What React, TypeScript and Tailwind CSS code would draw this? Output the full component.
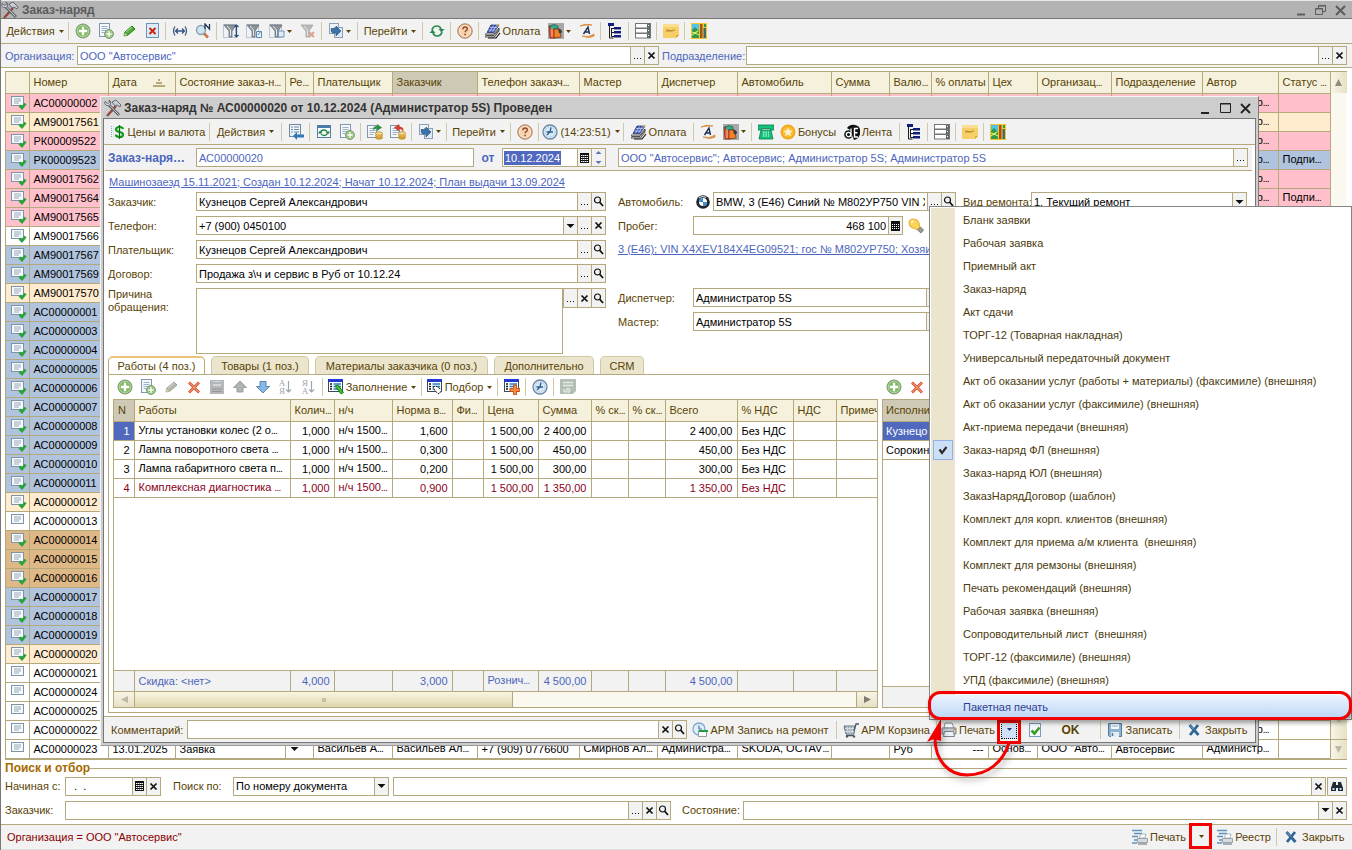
import type { ReactNode } from 'react'
import clsx from 'clsx'

const LINE = 'border-[#b3a97c]'

/* ---------- icons ---------- */

function Svg({ children, w = 16, h = 16 }: { children: ReactNode; w?: number; h?: number }) {
  return (
    <svg width={w} height={h} viewBox={`0 0 ${w} ${h}`} fill="none" className="shrink-0" aria-hidden>
      {children}
    </svg>
  )
}

const Doc = ({ x = 2, y = 1, w = 10, h = 13 }) => (
  <>
    <rect x={x + 0.5} y={y + 0.5} width={w} height={h} fill="#f4f8fc" stroke="#8297ad" />
    <path d={`M${x + 2.5} ${y + 3.5}h6M${x + 2.5} ${y + 5.5}h6M${x + 2.5} ${y + 7.5}h6M${x + 2.5} ${y + 9.5}h4`} stroke="#9bb2c9" />
  </>
)

const Plus = ({ cx, cy, r }: { cx: number; cy: number; r: number }) => (
  <>
    <circle cx={cx} cy={cy} r={r} fill="#7fbb62" stroke="#7f9277" />
    <circle cx={cx} cy={cy} r={r - 1.2} stroke="#c4e2b4" strokeWidth=".7" />
    <path d={`M${cx - r * 0.6} ${cy}h${r * 1.2}M${cx} ${cy - r * 0.6}v${r * 1.2}`} stroke="#fff" strokeWidth={r / 3} />
  </>
)

const Tools = () => (
  <Svg w={18} h={18}>
    <path d="M3 17L12 7" stroke="#8f4a35" strokeWidth="2.4" />
    <path d="M8 3l4-2 5 5-1 2-3-2-2 1z" fill="#c9ced6" stroke="#4c5058" strokeWidth=".8" />
    <path d="M4 5l11 11" stroke="#565b64" strokeWidth="2.6" />
    <path d="M4.500 5l10 10.500" stroke="#d5dae2" strokeWidth="1" />
    <path d="M1 2.500a3 3 0 1 0 4-1.500l.5 2.500-2 1z" fill="#d5dae2" stroke="#4c5058" strokeWidth=".8" />
  </Svg>
)
const Add = () => <Svg><Plus cx={8} cy={8} r={7} /></Svg>
const AddDoc = () => <Svg><Doc x={1} y={0} /><Plus cx={11} cy={11} r={4.4} /></Svg>
const Pencil = ({ off = false }) => (
  <Svg>
    <path d="M3 13l1-4 7-6 3 3-7 6z" fill={off ? '#b5b9b0' : '#4fae35'} stroke={off ? '#9ba098' : '#2f7a22'} />
    <path d="M5 9l6-5" stroke={off ? '#d4d7d0' : '#a9e08f'} />
    <path d="M3 13l1-3 2 2z" fill="#e9d3a2" />
  </Svg>
)
const DelDoc = () => (
  <Svg>
    <rect x="2.500" y=".5" width="12" height="14" fill="#dcebf8" stroke="#6d93b8" />
    <path d="M5.500 5l6 6M11.500 5l-6 6" stroke="#c8240f" strokeWidth="2" />
  </Svg>
)
const Fit = () => (
  <Svg>
    <path d="M3 3.500q-3 4.500 0 9M13 3.500q3 4.500 0 9" stroke="#34557d" strokeWidth="1.200" />
    <path d="M4 8h8M6 5.500L3.500 8 6 10.500M10 5.500L12.500 8 10 10.500" stroke="#34557d" strokeWidth="1.300" />
  </Svg>
)
const Find = () => (
  <Svg>
    <circle cx="6" cy="7" r="4.500" fill="#cfe3f3" stroke="#8a9fb3" strokeWidth="1.400" />
    <path d="M9 10.500l4 4" stroke="#c97a4a" strokeWidth="2.600" />
    <path d="M10 6V1l4.500 5V1" stroke="#1d3453" strokeWidth="1.300" />
  </Svg>
)
const Funnel = ({ kind = 0 }) => (
  <Svg>
    {kind < 3 && <rect x=".5" y="1.500" width="12" height="13" fill="#eef3f8" stroke="#b9c6d4" />}
    {kind === 2 && <path d="M9 8h6v6H9z" fill="#dcebf8" stroke="#6d93b8" />}
    <path d="M1 2h12L9 8v6H6V8z" fill={kind === 3 ? '#b9b9b9' : '#8d9298'} stroke={kind === 3 ? '#a5a5a5' : '#6b7178'} strokeWidth=".8" />
    <path d="M4 3l3.500 4v6" stroke="#e6e9ec" strokeWidth="1" />
    {kind === 0 && <path d="M13.500 2v12M11.500 4l2-2 2 2M11.500 12l2 2 2-2" stroke="#24507f" strokeWidth="1.200" />}
    {kind === 1 && <path d="M10.500 8.500h5v6h-5zM12 12l3-4" stroke="#5d87b4" fill="#e4f0fa" />}
    {kind === 3 && <path d="M9 9l5 5M14 9l-5 5" stroke="#d9a08a" strokeWidth="1.800" />}
  </Svg>
)
const CopyArrow = () => (
  <Svg>
    <rect x="1.500" y=".5" width="9" height="10" fill="#eef3f8" stroke="#8ba0b6" />
    <rect x="6.500" y="4.500" width="8" height="10" fill="#dfeaf5" stroke="#8ba0b6" />
    <path d="M3 5.500h5V3l5 5-5 5v-3H5q-2 0-2-4z" fill="#3d72a8" stroke="#234f7c" strokeWidth=".6" />
  </Svg>
)
const Refresh = () => (
  <Svg>
    <path d="M3 7q1-4 5-4 3 0 4 3M13 9q-1 4-5 4-3 0-4-3" stroke="#2b8a4d" strokeWidth="1.700" />
    <path d="M9.500 6h6L12.500 9.500zM.5 10h6L3.500 6.500z" fill="#2b8a4d" />
  </Svg>
)
const Help = () => (
  <Svg>
    <circle cx="8" cy="8" r="7.200" fill="#f0b98c" stroke="#a97b5e" />
    <circle cx="8" cy="8" r="5.600" fill="#f7d2b0" stroke="#fdeede" strokeWidth=".8" />
    <path d="M5.800 6.300q.2-2.300 2.300-2.300 2.200 0 2.200 1.900 0 1-1.200 1.700-1 .6-1 1.700" stroke="#8b4a22" strokeWidth="1.400" />
    <path d="M7.300 10.800h1.600v1.500H7.300z" fill="#8b4a22" />
  </Svg>
)
const Pay = () => (
  <Svg>
    <path d="M2 9.500L6 2h8L9 9.500z" fill="#3d55b5" stroke="#1c2a6e" strokeWidth=".7" />
    <path d="M5 4.500h7M3.500 7h7M8.500 2.500l-4 6.500M11.500 2.500l-4 6.500" stroke="#c3cef8" strokeWidth=".8" />
    <path d="M0 11h9l5-6v3l-4.500 6H0z" fill="#dfe2d8" stroke="#2a2a2a" strokeWidth=".8" />
    <path d="M1 12.500h8l5-6" stroke="#2a2a2a" strokeWidth=".8" />
    <path d="M3 15h8l4-5" stroke="#111" strokeWidth="1.200" />
    <path d="M12 3l2-2" stroke="#d8b84f" strokeWidth="1.500" />
  </Svg>
)
const Books = () => (
  <Svg>
    <path d="M0 0h16v16H0z" fill="#a8a8a8" />
    <path d="M1 3h5l1 12H2z" fill="#e8542b" stroke="#7d2410" strokeWidth=".7" />
    <path d="M2 3q4-3 8 0v3H3z" fill="#3aa68c" stroke="#155c4c" strokeWidth=".7" />
    <path d="M6 6h6l1 8-7 1z" fill="#f08228" stroke="#6d2d0b" strokeWidth=".7" />
    <path d="M10 6q4 0 4 3-1 2-3 1z" fill="#3c3c3c" />
    <path d="M4 5v9" stroke="#f9c0a0" />
  </Svg>
)
const ASwoosh = () => (
  <Svg>
    <path d="M1 3q5-3 12-1-6-.5-12 1zM3 13q7 2 12-2v2q-5 3-12 0z" fill="#d98b3a" stroke="#d98b3a" strokeWidth=".8" />
    <path d="M4.500 11L9 4l1.500 7M6 9h4.500" stroke="#1d2f57" strokeWidth="1.400" />
  </Svg>
)
const Tree = () => (
  <Svg>
    <path d="M1 0h6v3H1zM7 4h7v2.500H7zM7 8h7v2.500H7zM7 12h7v2.500H7z" fill="#101f7a" />
    <path d="M2.500 3v12h4M4.500 5v8.500M4.500 5.500H7M4.500 9.500H7M4.500 13.500H7" stroke="#1a1a1a" />
  </Svg>
)
const Drawers = () => (
  <Svg>
    {[0, 5, 10].map((y) => (
      <g key={y}>
        <rect x=".5" y={y + 0.5} width="15" height="4.500" fill="#fff" stroke="#747474" />
        <path d={`M12 ${y + 1}h3v4h-3z`} fill="#5b6a68" />
        <path d={`M13 ${y + 2}h1v1h-1z`} fill="#fff" />
      </g>
    ))}
  </Svg>
)
const Note = () => (
  <Svg>
    <path d="M0 1h16v11l-3 3H0z" fill="#f6cf66" />
    <path d="M0 1h16v3H0z" fill="#fadf92" />
    <path d="M13 15v-3h3z" fill="#d9a53a" />
    <path d="M3.500 8.500q1-4 1.500 0 1-3 2 0 1-3 2 0 1-3 3-1" stroke="#b07a28" strokeWidth=".9" />
  </Svg>
)
const MapIcon = () => (
  <Svg>
    <path d="M0 0h16v16H0z" fill="#f7c62f" />
    <path d="M1 1h7v6H1z" fill="#4fc3e8" />
    <path d="M1 7l3-3 4 4v7H1z" fill="#2e9b4a" />
    <path d="M1 12q3-3 7 0M1 9l3 1 3-2" stroke="#eaf36b" strokeWidth="1.200" />
    <path d="M9 1h2.500v14H9z" fill="#a6521c" />
    <path d="M12.500 5h2.500v10h-2.500z" fill="#3f6d74" />
    <path d="M13 1h2v3h-2z" fill="#2e9b4a" />
  </Svg>
)
const Dollar = () => (
  <Svg>
    <path d="M1.500 2v12" stroke="#8fa2b6" strokeDasharray="1 1" />
    <path d="M3.500 2v12" stroke="#c9d3de" strokeDasharray="1 1" />
    <path d="M13 5Q12.500 3 9.500 3 6 3 6 5.500 6 7.500 9.500 8t3.500 2.700Q13 13 9.500 13t-3.700-2.300" stroke="#149a1d" strokeWidth="2.200" />
    <path d="M9.500 1v14" stroke="#0c6e14" strokeWidth="1.300" />
  </Svg>
)
const ListBack = () => (
  <Svg>
    <rect x="1.500" y=".5" width="11" height="12" fill="#eef4fa" stroke="#7189a1" />
    <path d="M3 3h2M3 5.500h2M3 8h2M6 3h5M6 5.500h5M6 8h5" stroke="#7189a1" />
    <path d="M5 12l4-4v2.500h7v3H9V16z" fill="#2f78b7" />
  </Svg>
)
const WinRefresh = () => (
  <Svg>
    <rect x="1.500" y="1.500" width="13" height="12" fill="#f5f9fd" stroke="#587a9b" />
    <path d="M1 1h14v3H1z" fill="#4c7ba8" />
    <path d="M4.500 8q1-2 3.500-2 2 0 3 1.500M11.500 9.500q-1 2-3.500 2-2 0-3-1.500" stroke="#1f7f3f" strokeWidth="1.300" />
    <path d="M9.500 7.500h4.500l-2 3zM2 9.500h4.500l-2.500-3z" fill="#1f7f3f" />
  </Svg>
)
const Coins = ({ red = false }) => (
  <Svg>
    <Doc x={0} y={1} w={9} h={12} />
    {red ? <path d="M13 9q0-4-4-4v2.500L4 3.500 9 0v2.500q6 0 4 6.500z" fill="#d8402a" /> : <path d="M6 6q0-4 4-4V0l5 3.500L10 7V4.500Q8 4.500 6 6z" fill="#2f8f3d" />}
    <ellipse cx="12" cy="13.500" rx="3.500" ry="1.700" fill="#e9b13a" stroke="#a97413" strokeWidth=".7" />
    <ellipse cx="12" cy="11.500" rx="3.500" ry="1.700" fill="#f5cb5c" stroke="#a97413" strokeWidth=".7" />
    <ellipse cx="12" cy="9.500" rx="3.500" ry="1.700" fill="#fbe08c" stroke="#a97413" strokeWidth=".7" />
  </Svg>
)
const Clock = () => (
  <Svg>
    <circle cx="8" cy="8" r="7" fill="#dbeaf7" stroke="#6b87a3" strokeWidth="1.300" />
    <circle cx="8" cy="8" r="5" stroke="#8fb0cf" strokeWidth="1" strokeDasharray="1 1.600" />
    <path d="M9 3.500L8 8 5 11M4.500 8H11" stroke="#2a5f93" strokeWidth="1.300" />
  </Svg>
)
const Phone = () => (
  <Svg>
    <path d="M0 1h16v5h-3.500V4.500h-9V6H0z" fill="#12c27c" stroke="#077a4b" strokeWidth=".8" />
    <path d="M3 6h10l2 9H1z" fill="#12c27c" stroke="#077a4b" strokeWidth=".8" />
    <path d="M5 8h6M5 10h6M5 12h6" stroke="#e6fff3" strokeDasharray="1.500 1" />
  </Svg>
)
const Bonus = () => (
  <Svg>
    <circle cx="8" cy="8" r="7.500" fill="#f6a81c" />
    <circle cx="8" cy="8" r="5.500" fill="#f9bd3e" />
    <path d="M8 3.500l1.400 3 3.200.3-2.400 2.200.7 3.200L8 10.600l-2.900 1.600.7-3.200-2.400-2.200 3.200-.3z" fill="#fff3cf" />
  </Svg>
)
const Tape = () => (
  <Svg>
    <path d="M3 4q3-4 8-3 5 1 5 5v4q-1 5-6 6L6 6z" fill="#111" />
    <circle cx="4.500" cy="10.500" r="4.300" fill="#111" />
    <circle cx="4.500" cy="10.500" r="2.200" stroke="#fff" strokeWidth="1.300" />
    <path d="M7 4.500v8.500" stroke="#fff" strokeWidth="1.300" />
    <path d="M14 4.500h-3.500v8.500H14M10.500 8.700h3" stroke="#fff" strokeWidth="1.400" />
  </Svg>
)
const RedX = () => <Svg><path d="M3 3.500l10 10M13 3.500L3 13.500" stroke="#d9532c" strokeWidth="2.800" /><path d="M3.500 4l9 9M12.500 4l-9 9" stroke="#f9b59b" strokeWidth="1" /></Svg>
const BlueX = () => <Svg><path d="M3.500 3l9 10M12 3L4 13" stroke="#2f6596" strokeWidth="2.800" /><path d="M4 3.500l4 4" stroke="#86add0" /></Svg>
const SaveOff = () => (
  <Svg>
    <path d="M1 1h14v14H1z" fill="#b4b8bb" />
    <path d="M4 2h8v5H4z" fill="#d3d6d8" />
    <path d="M4 4h8M3 10h10M3 12.500h10" stroke="#92979b" />
  </Svg>
)
const Arrow = ({ down = false }) => (
  <Svg>
    {down ? (
      <path d="M5 2.500h6v5h3.500L8 14 1.500 7.500H5z" fill="#86b9e6" stroke="#5687b5" />
    ) : (
      <path d="M5 13h6V8.500h3.500L8 2 1.500 8.500H5z" fill="#b0b4b6" stroke="#9ba0a3" />
    )}
  </Svg>
)
const Sort = ({ top, bottom }: { top: string; bottom: string }) => (
  <span className="flex h-4 items-center text-[#a0a4a8]">
    <span className="flex flex-col font-serif text-[9px] leading-[8px]">
      <span>{top}</span>
      <span>{bottom}</span>
    </span>
    <svg width="7" height="16" viewBox="0 0 7 16" fill="none" aria-hidden>
      <path d="M3.500 2v11M1 10.500L3.500 13 6 10.500" stroke="#a0a4a8" strokeWidth="1.200" />
    </svg>
  </span>
)
const ListIcon = ({ mark }: { mark: 'wand' | 'hand' | 'plus' }) => (
  <Svg>
    <rect x=".5" y=".5" width="14" height="12" fill="#fff" stroke="#3a4a5a" />
    <path d="M0 0h15v3H0z" fill="#2238d0" />
    <path d="M2 5h2M2 7.500h2M2 10h2" stroke="#1a1a1a" strokeWidth="1.400" />
    <path d="M5.500 5H13M5.500 7.500H13M5.500 10H13" stroke="#2a7fc0" strokeWidth="1.300" />
    {mark === 'wand' && <path d="M7 7l3-1 5.500 7.500L13 15z" fill="#3fc22b" stroke="#0d6f12" strokeWidth=".8" />}
    {mark === 'hand' && <path d="M6 8l3-1 6 4-3 4-4-3z" fill="#fff" stroke="#111" strokeDasharray="2 1" />}
    {mark === 'plus' && <path d="M9.500 6h3v3.500H16v3h-3.500V16h-3v-3.500H6v-3h3.500z" fill="#f58a3c" stroke="#c44a12" strokeWidth=".8" />}
  </Svg>
)
const FormOff = () => (
  <Svg>
    <path d="M0 0h16v12l-3 3H0z" fill="#b3bfb5" />
    <path d="M3 3.500h10M3 6.500h10" stroke="#e3e9e4" strokeWidth="1.500" />
    <path d="M4 10v2q2 2 3 0v-2q2-1 3 1l-2 3" stroke="#e3e9e4" strokeWidth="1.400" />
  </Svg>
)
const Bmw = () => (
  <Svg w={14} h={14}>
    <circle cx="7" cy="7" r="6.800" fill="#22262c" />
    <circle cx="7" cy="7" r="4" fill="#fff" />
    <path d="M7 3a4 4 0 0 0-4 4h4zM7 11a4 4 0 0 0 4-4H7z" fill="#3f8fd0" />
    <path d="M3 3q3-2.500 7-.5" stroke="#c9d2dc" strokeWidth="1.200" />
  </Svg>
)
const Bulb = () => (
  <Svg>
    <path d="M1 5Q1 1 5.500 1T11 5q0 2 1 4l-3 3q-2-2-4.500-2Q1 9 1 5z" fill="#fbd55a" stroke="#e3ab32" />
    <path d="M3.500 5Q4 3 6 3" stroke="#fff4c4" strokeWidth="1.500" />
    <path d="M9.500 12l3-3 3 3-2.500 3z" fill="#9a9a94" stroke="#6f6f6a" strokeWidth=".8" />
  </Svg>
)
const ClockDoc = () => (
  <Svg>
    <circle cx="7" cy="7" r="6" fill="#dfeefa" stroke="#7fa9cd" strokeWidth="1.300" />
    <path d="M7 3.500V7h3" stroke="#4a7ba6" strokeWidth="1.200" />
    <path d="M6.500 8.500h8v6h-8z" fill="#fff" stroke="#8f9aa5" />
    <path d="M7 8h9v2H7z" fill="#1e9b3b" />
  </Svg>
)
const Cart = () => (
  <Svg>
    <path d="M1 4h11l-1 8H3z" fill="#9eabb6" stroke="#66727c" />
    <path d="M4 4l1 8M7 4v8M10 4l-1 8M2 6.500h9M2 9.500h9" stroke="#dde5ec" strokeWidth=".8" />
    <path d="M11 9l2-7h3M3 13.500h8" stroke="#4c5863" strokeWidth="1.300" />
    <circle cx="4" cy="14.500" r="1.200" fill="#4c5863" />
    <circle cx="11" cy="14.500" r="1.200" fill="#4c5863" />
  </Svg>
)
const Printer = () => (
  <Svg>
    <path d="M4 1h7l2 5H3z" fill="#fff" stroke="#8b97a3" />
    <path d="M1 6h14v6H1z" fill="#c3cad1" stroke="#77828c" />
    <path d="M3.500 9.500h9l1 5h-11z" fill="#eef2f6" stroke="#77828c" />
    <path d="M12 7.500h2" stroke="#e08a2c" strokeWidth="1.500" />
  </Svg>
)
const CheckDoc = () => (
  <Svg>
    <rect x="2.500" y="1.500" width="11" height="13" fill="#f3f9fe" stroke="#7b9cb9" />
    <path d="M4.500 8.500l3 3 5-6" stroke="#3c9b2b" strokeWidth="2.600" />
  </Svg>
)
const Floppy = () => (
  <Svg>
    <path d="M1.500 1.500h13v13h-12l-1-1z" fill="#8fb2d1" stroke="#54789a" />
    <path d="M4 2h8v5H4z" fill="#f4f9fd" />
    <path d="M4 10h8v5H4z" fill="#e4edf5" />
    <path d="M5 4h6" stroke="#9db6cc" />
    <path d="M5.500 11v3" stroke="#54789a" strokeWidth="1.500" />
  </Svg>
)
const PrintList = () => (
  <Svg>
    <path d="M0 1.500h10M2 4.500h8M0 7.500h6M2 11h3M0 14h5" stroke="#5f93bd" strokeWidth="1.400" />
    <path d="M7 9l2-4h5l-1 4z" fill="#fff" stroke="#9aa6b0" strokeWidth=".8" />
    <path d="M5.500 9.500h10v4h-10z" fill="#d5dbe1" stroke="#8a949d" strokeWidth=".8" />
    <path d="M6 15h9" stroke="#5e6972" />
  </Svg>
)
const RowIcon = ({ done }: { done: boolean }) => (
  <Svg>
    <rect x=".5" y="1.500" width="12" height="9" fill="#f7fafc" stroke="#7f93a8" />
    <path d="M3 4h7M3 6h7M3 8h5" stroke="#97a8b9" />
    {done && <path d="M8.500 10.500l2.500 2.500 3.500-4.500" stroke="#2aa33a" strokeWidth="2.800" />}
  </Svg>
)
const Glass = () => (
  <Svg w={11} h={11}>
    <circle cx="4.500" cy="4" r="3" stroke="#111" strokeWidth="1.200" />
    <path d="M6.500 6l3.500 4" stroke="#111" strokeWidth="1.800" />
  </Svg>
)
const Cross = () => <Svg w={9} h={9}><path d="M1.500 1.500l6 6M7.500 1.500l-6 6" stroke="#111" strokeWidth="1.700" /></Svg>
const Dots = () => <Svg w={9} h={9}><path d="M1 7h1v1H1zM4 7h1v1H4zM7 7h1v1H7z" fill="#111" /></Svg>
const Calc = () => (
  <Svg w={9} h={10}>
    <path d="M0 0h9v10H0z" fill="#111" />
    <path d="M1 3.500h7M1 5.500h7M1 7.500h7" stroke="#fff" strokeDasharray="1 1" />
  </Svg>
)
const Calendar = () => (
  <Svg w={9} h={10}>
    <path d="M0 0h9v10H0z" fill="#111" />
    <path d="M1 2.500h7M1 4.500h7M1 6.500h7M1 8.500h7" stroke="#fff" />
    <path d="M2.500 2v7M4.500 2v7M6.500 2v7" stroke="#111" strokeWidth=".5" />
  </Svg>
)
const Down = () => <Svg w={9} h={6}><path d="M.5 1h8l-4 4z" fill="#111" /></Svg>
const Caret = ({ color = '#594304' }) => <Svg w={5} h={3}><path d="M0 0h5L2.500 3z" fill={color} /></Svg>
const Spin = () => (
  <Svg w={7} h={13}>
    <path d="M3.500 0L6.500 3h-6zM3.500 13l3-3h-6z" fill="#6173b5" />
  </Svg>
)
const Binoculars = () => (
  <Svg w={12} h={12}>
    <path d="M2 2h3v3h2V2h3l2 6v3H7V8H5v3H0V8z" fill="#1f2b33" />
    <path d="M1.500 8h2v2h-2zM8.500 8h2v2h-2z" fill="#c6dbe6" />
  </Svg>
)

const GLYPHS = {
  dots: { icon: <Dots />, name: 'Выбрать' },
  clear: { icon: <Cross />, name: 'Очистить' },
  find: { icon: <Glass />, name: 'Открыть' },
  down: { icon: <Down />, name: 'Список' },
  calc: { icon: <Calc />, name: 'Калькулятор' },
  date: { icon: <Calendar />, name: 'Календарь' },
  spin: { icon: <Spin />, name: 'Изменить' },
}
type Glyph = keyof typeof GLYPHS

/* ---------- controls ---------- */

/* Roboto's ellipsis is narrow enough for the tight columns */
function Cut({ text }: { text: string }) {
  if (!text.endsWith('…')) return text
  return (
    <>
      {text.slice(0, -1)}
      <span className="font-['Roboto',sans-serif] text-[10px]">…</span>
    </>
  )
}

function Sep() {
  return (
    <span className="flex w-[5px] shrink-0 justify-center">
      <span className="h-[18px] w-px bg-[#cfc9a8]" />
    </span>
  )
}

function Tool({ icon, text, caret, name, width = 'w-[23px]' }: { icon?: ReactNode; text?: string; caret?: boolean; name?: string; width?: string }) {
  return (
    <button type="button" aria-label={text ? undefined : name} className={clsx('flex h-[22px] shrink-0 items-center justify-center gap-[2px] whitespace-nowrap', width)}>
      {icon}
      {text}
      {caret && <span className={clsx(text && 'pl-[2px]')}><Caret /></span>}
    </button>
  )
}

function Field({ id, value, name, actions = [], width, inputClass }: { id: string; value?: string; name?: string; actions?: Glyph[]; width: string; inputClass?: string }) {
  return (
    <div className={clsx('flex h-[19px] min-w-0 border bg-white', LINE, width)}>
      <input id={id} aria-label={name} defaultValue={value} className={clsx('min-w-0 flex-1 bg-transparent px-[2px] outline-none', inputClass ?? 'text-black')} />
      <Actions list={actions} />
    </div>
  )
}

function Actions({ list }: { list: Glyph[] }) {
  return (
    <>
      {list.map((a) => (
        <button key={a} type="button" aria-label={GLYPHS[a].name} className={clsx('flex w-[14px] shrink-0 items-center justify-center border-l bg-[#f2f2f2]', LINE)}>
          {GLYPHS[a].icon}
        </button>
      ))}
    </>
  )
}

function Choice({ id, value, width }: { id: string; value: string; width: string }) {
  return (
    <div className={clsx('relative flex h-[19px] min-w-0 border bg-white', LINE, width)}>
      <select id={id} className="min-w-0 flex-1 appearance-none bg-transparent px-[2px] text-black outline-none">
        <option>{value}</option>
      </select>
      <span className={clsx('pointer-events-none absolute inset-y-0 right-0 flex w-[14px] items-center justify-center border-l bg-[#f2f2f2]', LINE)}>
        <Down />
      </span>
    </div>
  )
}

/* ---------- order list ---------- */

const PINK = 'bg-[#ffc0cb]'
const BLUE = 'bg-[#b0c4de]'
const ALMOND = 'bg-[#ffebcd]'
const WOOD = 'bg-[#deb887]'
const WHITE = 'bg-white'

type Order = { no: string; tone: string; draft?: boolean; status?: string }

const ORDERS: Order[] = [
  { no: 'АС00000002', tone: PINK },
  { no: 'АМ90017561', tone: ALMOND },
  { no: 'РК00009522', tone: PINK },
  { no: 'РК00009523', tone: BLUE, status: 'Подпи…' },
  { no: 'АМ90017562', tone: PINK },
  { no: 'АМ90017564', tone: PINK, status: 'Подпи…' },
  { no: 'АМ90017565', tone: PINK },
  { no: 'АМ90017566', tone: WHITE },
  { no: 'АМ90017567', tone: BLUE },
  { no: 'АМ90017569', tone: BLUE },
  { no: 'АМ90017570', tone: ALMOND },
  ...['01', '03', '04', '05', '06', '07', '08', '09', '10', '11'].map((n) => ({ no: `АС000000${n}`, tone: BLUE })),
  { no: 'АС00000012', tone: ALMOND },
  { no: 'АС00000013', tone: WHITE, draft: true },
  ...['14', '15', '16'].map((n) => ({ no: `АС000000${n}`, tone: WOOD })),
  ...['17', '18', '19'].map((n) => ({ no: `АС000000${n}`, tone: BLUE })),
  { no: 'АС00000020', tone: ALMOND },
  ...['21', '24', '25', '22', '23'].map((n) => ({ no: `АС000000${n}`, tone: WHITE, draft: true })),
]

const ORDER_COLS: [string, string][] = [
  ['', 'w-[23px]'],
  ['Номер', 'w-[79px]'],
  ['Дата', 'w-[67px]'],
  ['Состояние заказ-н…', 'w-[110px]'],
  ['Ре…', 'w-[28px]'],
  ['Плательщик', 'w-[79px]'],
  ['Заказчик', 'w-[85px]'],
  ['Телефон заказч…', 'w-[102px]'],
  ['Мастер', 'w-[78px]'],
  ['Диспетчер', 'w-[80px]'],
  ['Автомобиль', 'w-[94px]'],
  ['Сумма', 'w-[58px]'],
  ['Валю…', 'w-[42px]'],
  ['% оплаты', 'w-[57px]'],
  ['Цех', 'w-[49px]'],
  ['Организац…', 'w-[74px]'],
  ['Подразделение', 'w-[91px]'],
  ['Автор', 'w-[76px]'],
  ['Статус …', 'w-[52px]'],
]

const LAST_ROW = ['13.01.2025', 'Заявка', '▾', 'Васильев А…', 'Васильев Ал…', '+7 (909) 0776600', 'Смирнов Ал…', 'Администра…', 'SKODA, OCTAV…', '', 'Руб', '---', 'Основ…', 'ООО "Авто…', 'Автосервис']

function OrderTable() {
  return (
    <div className={clsx('mr-[5px] ml-[4px] flex border', LINE)}>
      <table className="w-full flex-1 table-fixed border-collapse">
        <thead>
          <tr className="h-[21px] bg-[#f5f1dc] text-left">
            {ORDER_COLS.map(([title, w], i) => (
              <th key={title} className={clsx('overflow-hidden border-r border-b pl-[4px] font-normal whitespace-nowrap', LINE, w, title === 'Заказчик' && 'bg-[#cdc9b4]')}>
                <Cut text={title} />
                {i === 2 && (
                  <svg width="12" height="8" viewBox="0 0 12 8" className="ml-4 inline" aria-hidden>
                    <path d="M5 0h2v2H5zM3 3h6v2H3zM0 6h12v2H0z" fill="#b9a878" />
                  </svg>
                )}
              </th>
            ))}
          </tr>
        </thead>
        <tbody className="text-black">
          {ORDERS.map((o, row) => (
            <tr key={o.no} className={clsx('h-[19px]', o.tone)}>
              <td className={clsx('border-r border-b pl-[5px]', LINE)}>
                <RowIcon done={!o.draft} />
              </td>
              <td className={clsx('border-r border-b pl-[4px]', LINE)}>{o.no}</td>
              {LAST_ROW.map((text, i) => (
                <td key={i} className={clsx('overflow-hidden border-r border-b pl-[4px] whitespace-nowrap', LINE, text === '---' && 'pr-1 text-right')}>
                  {row === ORDERS.length - 1 ? text === '▾' ? <Down /> : <Cut text={text} /> : null}
                </td>
              ))}
              <td className={clsx('overflow-hidden border-r border-b pl-[4px] whitespace-nowrap', LINE)}><Cut text="Администр…" /></td>
              <td className={clsx('border-r border-b pl-[4px]', LINE)}><Cut text={o.status ?? ''} /></td>
            </tr>
          ))}
        </tbody>
      </table>
      <div className="flex w-[16px] shrink-0 flex-col bg-[#faf8ef]">
        <span className="flex h-[21px] items-center justify-center bg-gradient-to-r from-[#f8f5e6] to-[#e6e0c4]">
          <svg width="7" height="7" viewBox="0 0 7 7" aria-hidden><path d="M3.500 0L7 7H0z" fill="#8d8a80" /></svg>
        </span>
        <span className="flex-1" />
        <span className={clsx('flex h-[38px] items-center justify-center border-t bg-gradient-to-r from-[#f8f5e6] to-[#e6e0c4]', LINE)}>
          <span className="size-1 bg-[#d6cfae]" />
        </span>
        <span className={clsx('flex h-[20px] items-center justify-center border-t bg-gradient-to-r from-[#f8f5e6] to-[#e6e0c4]', LINE)}>
          <svg width="7" height="7" viewBox="0 0 7 7" aria-hidden><path d="M3.500 7L7 0H0z" fill="#bdb9a6" /></svg>
        </span>
      </div>
    </div>
  )
}

function MainToolbar() {
  return (
    <div className={clsx('flex h-[25px] items-center overflow-hidden border-b bg-[#f2f2f2] pl-[3px]', LINE)}>
      <Tool text="Действия" caret width="w-[62px]" />
      <Sep />
      <Tool icon={<Add />} name="Добавить" />
      <Tool icon={<AddDoc />} name="Добавить копированием" />
      <Tool icon={<Pencil />} name="Изменить" />
      <Tool icon={<DelDoc />} name="Пометить на удаление" />
      <Sep />
      <Tool icon={<Fit />} name="Интервал" />
      <Tool icon={<Find />} name="Найти" />
      <Sep />
      <Tool icon={<Funnel kind={0} />} name="Отбор" />
      <Tool icon={<Funnel kind={1} />} name="Отбор по значению" />
      <Tool icon={<Funnel kind={2} />} name="История отборов" caret width="w-[31px]" />
      <Tool icon={<Funnel kind={3} />} name="Отключить отбор" />
      <Sep />
      <Tool icon={<CopyArrow />} name="На основании" caret width="w-[31px]" />
      <Sep />
      <Tool text="Перейти" caret width="w-[60px]" />
      <Sep />
      <Tool icon={<Refresh />} name="Обновить" />
      <Sep />
      <Tool icon={<Help />} name="Справка" />
      <Sep />
      <Tool icon={<Pay />} text="Оплата" width="w-[63px]" />
      <Tool icon={<Books />} name="Справочники" caret width="w-[31px]" />
      <Tool icon={<ASwoosh />} name="Автограф" />
      <Sep />
      <Tool icon={<Tree />} name="Структура" />
      <Sep />
      <Tool icon={<Drawers />} name="Архив" />
      <Sep />
      <Tool icon={<Note />} name="Заметка" />
      <Sep />
      <Tool icon={<MapIcon />} name="Карта" />
    </div>
  )
}

/* ---------- order dialog ---------- */

function DialogToolbar() {
  return (
    <div className={clsx('flex h-[26px] shrink-0 items-center overflow-hidden border-b bg-[#f2f2f2] pl-[4px]', LINE)}>
      <Tool icon={<Dollar />} text="Цены и валюта" width="w-[99px]" />
      <Sep />
      <Tool text="Действия" caret width="w-[67px]" />
      <Sep />
      <Tool icon={<ListBack />} name="Перечитать" />
      <Sep />
      <Tool icon={<WinRefresh />} name="Обновить" />
      <Tool icon={<AddDoc />} name="Скопировать" />
      <Sep />
      <Tool icon={<Coins />} name="Провести" />
      <Tool icon={<Coins red />} name="Отменить проведение" />
      <Sep />
      <Tool icon={<CopyArrow />} name="На основании" caret width="w-[30px]" />
      <Sep />
      <Tool text="Перейти" caret width="w-[59px]" />
      <Sep />
      <Tool icon={<Help />} name="Справка" />
      <Sep />
      <Tool icon={<Clock />} text="(14:23:51)" caret width="w-[80px]" />
      <Sep />
      <Tool icon={<Pay />} text="Оплата" width="w-[65px]" />
      <Sep />
      <Tool icon={<ASwoosh />} name="Автограф" />
      <Tool icon={<Books />} name="Справочники" caret width="w-[30px]" />
      <Sep />
      <Tool icon={<Phone />} name="Позвонить" />
      <Tool icon={<Bonus />} text="Бонусы" width="w-[62px]" />
      <Tool icon={<Tape />} text="Лента" width="w-[58px]" />
      <Sep />
      <Tool icon={<Tree />} name="Структура" />
      <Sep />
      <Tool icon={<Drawers />} name="Архив" />
      <Sep />
      <Tool icon={<Note />} name="Заметка" />
      <Sep />
      <Tool icon={<MapIcon />} name="Карта" />
    </div>
  )
}

function Line({ id, label, wide, children }: { id: string; label: string; wide?: boolean; children: ReactNode }) {
  return (
    <div className="flex items-center">
      <label htmlFor={id} className={clsx('shrink-0', wide ? 'w-[88px]' : 'w-[75px]')}>{label}</label>
      {children}
    </div>
  )
}

function OrderForm() {
  return (
    <div className="flex items-start gap-3">
      <div className="flex w-[498px] shrink-0 flex-col gap-[5px]">
        <Line wide id="customer" label="Заказчик:">
          <Field id="customer" value="Кузнецов Сергей Александрович" actions={['dots', 'find']} width="flex-1" />
        </Line>
        <Line wide id="phone" label="Телефон:">
          <Field id="phone" value="+7 (900) 0450100" actions={['down', 'dots', 'clear']} width="flex-1" />
        </Line>
        <Line wide id="payer" label="Плательщик:">
          <Field id="payer" value="Кузнецов Сергей Александрович" actions={['dots', 'find']} width="flex-1" />
        </Line>
        <Line wide id="contract" label="Договор:">
          <Field id="contract" value="Продажа з\ч и сервис в Руб от 10.12.24" actions={['dots', 'find']} width="flex-1" />
        </Line>
        <div className="flex items-start">
          <label htmlFor="reason" className="w-[88px] shrink-0 leading-[13px]">Причина<br />обращения:</label>
          <textarea id="reason" className={clsx('h-[66px] flex-1 resize-none border bg-white outline-none', LINE)} />
          <div className={clsx('flex h-[20px] border-y border-r', LINE)}>
            <Actions list={['dots', 'clear', 'find']} />
          </div>
        </div>
      </div>
      <div className="flex min-w-0 flex-1 flex-col gap-[5px] pr-[8px]">
        <div className="flex items-center">
          <label htmlFor="car" className="w-[75px] shrink-0">Автомобиль:</label>
          <span className="flex w-[20px] shrink-0 justify-center"><Bmw /></span>
          <Field id="car" value="BMW, 3 (E46) Синий № М802УР750 VIN X" actions={['dots', 'find']} width="w-[243px] shrink-0" />
          <label htmlFor="kind" className="w-[75px] shrink-0 pl-[7px] whitespace-nowrap">Вид ремонта:</label>
          <Choice id="kind" value="1. Текущий ремонт" width="flex-1" />
        </div>
        <Line id="mileage" label="Пробег:">
          <Field id="mileage" value="468 100" actions={['calc']} width="w-[210px]" inputClass="text-right text-black" />
          <span className="pl-[5px]"><Bulb /></span>
        </Line>
        <a href="#car" className="h-[19px] w-[312px] overflow-hidden leading-[19px] whitespace-nowrap text-[#4d66bd] underline">
          3 (E46); VIN X4XEV184X4EG09521; гос № М802УР750; Хозяин
        </a>
        <span className="h-[19px]" />
        <Line id="dispatcher" label="Диспетчер:">
          <Field id="dispatcher" value="Администратор 5S" actions={['dots', 'find']} width="w-[262px]" />
        </Line>
        <Line id="master" label="Мастер:">
          <Field id="master" value="Администратор 5S" actions={['dots', 'find']} width="w-[262px]" />
        </Line>
      </div>
    </div>
  )
}

const TABS: [string, string][] = [
  ['Работы (4 поз.)', 'w-[97px]'],
  ['Товары (1 поз.)', 'w-[98px]'],
  ['Материалы заказчика (0 поз.)', 'w-[173px]'],
  ['Дополнительно', 'w-[100px]'],
  ['CRM', 'w-[44px]'],
]

const WORK_COLS: [string, string][] = [
  ['N', 'w-[20px]'],
  ['Работы', 'w-[156px]'],
  ['Колич…', 'w-[44px]'],
  ['н/ч', 'w-[58px]'],
  ['Норма в…', 'w-[60px]'],
  ['Фи…', 'w-[31px]'],
  ['Цена', 'w-[55px]'],
  ['Сумма', 'w-[53px]'],
  ['% ск…', 'w-[37px]'],
  ['% ск…', 'w-[37px]'],
  ['Всего', 'w-[72px]'],
  ['% НДС', 'w-[56px]'],
  ['НДС', 'w-[43px]'],
  ['Примеч', 'w-[41px]'],
]

const WORKS = [
  ['1', 'Углы установки колес (2 о…', '1,000', 'н/ч 1500…', '1,600', '', '1 500,00', '2 400,00', '', '', '2 400,00', 'Без НДС', '', ''],
  ['2', 'Лампа поворотного света …', '1,000', 'н/ч 1500…', '0,300', '', '1 500,00', '450,00', '', '', '450,00', 'Без НДС', '', ''],
  ['3', 'Лампа габаритного света п…', '1,000', 'н/ч 1500…', '0,200', '', '1 500,00', '300,00', '', '', '300,00', 'Без НДС', '', ''],
  ['4', 'Комплексная диагностика …', '1,000', 'н/ч 1500…', '0,900', '', '1 500,00', '1 350,00', '', '', '1 350,00', 'Без НДС', '', ''],
]
const TOTALS = ['', 'Скидка: <нет>', '4,000', '', '3,000', '', 'Рознич…', '4 500,00', '', '', '4 500,00', '', '', '']
const RIGHT = [0, 2, 4, 7, 10]

const cell = (i: number, more?: string | false) =>
  clsx('overflow-hidden whitespace-nowrap', i < WORK_COLS.length - 1 && 'border-r', LINE, RIGHT.includes(i) ? 'pr-[4px] text-right' : 'pl-[4px]', more)

function WorksTable() {
  return (
    <div className={clsx('flex w-[765px] shrink-0 flex-col border', LINE)}>
      <table className="w-full table-fixed border-collapse">
        <thead>
          <tr className="h-[21px] bg-[#f5f1dc] text-left">
            {WORK_COLS.map(([title, w], i) => (
              <th key={i} className={clsx('overflow-hidden border-b pl-[4px] font-normal whitespace-nowrap', i < WORK_COLS.length - 1 && 'border-r', LINE, w, i === 0 && 'bg-[#cdc9b4]')}>
                <Cut text={title} />
              </th>
            ))}
          </tr>
        </thead>
        <tbody>
          {WORKS.map((row, r) => (
            <tr key={row[0]} className={clsx('h-[19px]', r === 3 ? 'text-[#8b0020]' : 'text-black')}>
              {row.map((text, i) => (
                <td key={i} className={cell(i, clsx('border-b', i === 6 && 'pr-[4px] text-right', r === 0 && i === 0 && 'bg-[#5068be] text-white'))}>
                  <Cut text={text} />
                </td>
              ))}
            </tr>
          ))}
        </tbody>
      </table>
      <div className="flex-1" />
      <table className={clsx('w-full table-fixed border-collapse border-t bg-[#f2f2f2] text-[#4d66bd]', LINE)}>
        <tbody>
          <tr className="h-[21px]">
            {TOTALS.map((text, i) => (
              <td key={i} className={cell(i, WORK_COLS[i][1])}><Cut text={text} /></td>
            ))}
          </tr>
        </tbody>
      </table>
      <div className={clsx('flex h-[16px] border-t bg-[#faf8ef]', LINE)}>
        <span className={clsx('flex w-[21px] items-center justify-center border-r bg-gradient-to-b from-[#f8f5e6] to-[#e6e0c4]', LINE)}>
          <svg width="7" height="7" viewBox="0 0 7 7" aria-hidden><path d="M7 0v7L0 3.500z" fill="#bdb9a6" /></svg>
        </span>
        <span className={clsx('flex w-[378px] items-center justify-center border-r bg-gradient-to-b from-[#faf7e2] to-[#ded6ae]', LINE)}>
          <span className="size-1 bg-[#c9c19a]" />
        </span>
        <span className="flex-1" />
        <span className={clsx('flex w-[21px] items-center justify-center border-l bg-gradient-to-b from-[#f8f5e6] to-[#e6e0c4]', LINE)}>
          <svg width="7" height="7" viewBox="0 0 7 7" aria-hidden><path d="M0 0v7l7-3.500z" fill="#7d7a70" /></svg>
        </span>
      </div>
    </div>
  )
}

function OrderDialog() {
  return (
    <section className="absolute top-[96px] right-[93px] bottom-[104px] left-[99px] flex flex-col border border-t-[#f4f4f4] border-r-[#7c7c7c] border-b-[#9a9a9a] border-l-[#f4f4f4] bg-[#cdcdcd] px-[2px] pb-[2px]">
      <header className="flex h-[21px] shrink-0 items-center pl-[1px] font-bold text-[#333]">
        <Tools />
        <h2 className="flex-1 pl-[2px] text-[12px]">Заказ-наряд № АС00000020 от 10.12.2024 (Администратор 5S) Проведен</h2>
        <div className="flex gap-[2px] pr-[2px]">
          <button type="button" aria-label="Свернуть"><Svg w={18}><path d="M5 13h8" stroke="#222" strokeWidth="2" /></Svg></button>
          <button type="button" aria-label="Развернуть"><Svg w={18}><path d="M4.500 3.500h10v9h-10zM4 4h11" stroke="#222" /></Svg></button>
          <button type="button" aria-label="Закрыть окно"><Svg w={18}><path d="M5 4l9 9M14 4l-9 9" stroke="#222" strokeWidth="1.800" /></Svg></button>
        </div>
      </header>
      <div className="flex min-h-0 flex-1 flex-col overflow-hidden border border-[#777] bg-white">
        <DialogToolbar />
        <div className={clsx('mr-[3px] ml-px flex h-[26px] shrink-0 items-center border-b bg-[#f2f2f2] pr-[4px] pl-[3px] text-[#4d66bd]', LINE)}>
          <label htmlFor="number" className="w-[88px] shrink-0 text-[12px] font-bold">Заказ-наря…</label>
          <Field id="number" value="АС00000020" width="w-[278px]" inputClass="text-[#4d66bd]" />
          <label htmlFor="date" className="w-[28px] text-center text-[12px] font-bold">от</label>
          <div className={clsx('flex h-[19px] w-[104px] border bg-white', LINE)}>
            <span className="flex min-w-0 flex-1 items-center pl-px">
              <input id="date" defaultValue="10.12.2024" className="h-[14px] w-[57px] bg-[#5068be] px-px text-white outline-none" />
            </span>
            <Actions list={['date', 'spin']} />
          </div>
          <div className="flex min-w-0 flex-1 pl-3">
            <Field id="org-line" name="Реквизиты" value={'ООО "Автосервис"; Автосервис; Администратор 5S; Администратор 5S'} actions={['dots']} width="flex-1" inputClass="text-[#4d66bd]" />
          </div>
        </div>
        <div className="flex min-h-0 flex-1 flex-col pl-[4px]">
          <a href="#dates" className="flex h-[21px] shrink-0 items-center pl-px text-[#4d66bd] underline">
            Машинозаезд 15.11.2021; Создан 10.12.2024; Начат 10.12.2024; План выдачи 13.09.2024
          </a>
          <OrderForm />
          <div role="tablist" className="mt-[2px] flex shrink-0 gap-[6px]">
            {TABS.map(([title, w], i) => (
              <button
                key={title}
                type="button"
                role="tab"
                aria-selected={i === 0}
                className={clsx('h-[18px] rounded-t-[5px] border border-b-0 whitespace-nowrap', w, i === 0 ? 'border-t-2 border-[#b3a97c] border-t-[#ecc37a] bg-white' : 'border-[#cfc8a2] bg-[#ebe5cd]')}
              >
                {title}
              </button>
            ))}
          </div>
          <div className={clsx('mr-[3px] flex min-h-0 flex-1 flex-col border pb-[4px] pl-[4px]', LINE)}>
            <div className="flex min-h-0 flex-1 gap-[4px]">
              <div className="flex flex-col">
                <div className="flex h-[24px] shrink-0 items-center">
                  <Tool icon={<Add />} name="Добавить строку" />
                  <Tool icon={<AddDoc />} name="Скопировать строку" />
                  <Tool icon={<Pencil off />} name="Изменить строку" />
                  <Tool icon={<RedX />} name="Удалить строку" />
                  <Tool icon={<SaveOff />} name="Закончить редактирование" />
                  <Tool icon={<Arrow />} name="Вверх" />
                  <Tool icon={<Arrow down />} name="Вниз" />
                  <Tool icon={<Sort top="А" bottom="Я" />} name="По возрастанию" />
                  <Tool icon={<Sort top="Я" bottom="А" />} name="По убыванию" />
                  <Sep />
                  <Tool icon={<ListIcon mark="wand" />} text="Заполнение" caret width="w-[94px]" />
                  <Sep />
                  <Tool icon={<ListIcon mark="hand" />} text="Подбор" caret width="w-[71px]" />
                  <Sep />
                  <Tool icon={<ListIcon mark="plus" />} name="Добавить работы" />
                  <Sep />
                  <Tool icon={<Clock />} name="Время" />
                  <Sep />
                  <Tool icon={<FormOff />} name="Форма" />
                </div>
                <div className="flex min-h-0 flex-1"><WorksTable /></div>
              </div>
              <div className="flex min-w-0 flex-1 flex-col pr-[4px]">
                <div className="flex h-[24px] shrink-0 items-center">
                  <Tool icon={<Add />} name="Добавить исполнителя" />
                  <Tool icon={<RedX />} name="Удалить исполнителя" />
                </div>
                <div className={clsx('flex min-h-0 flex-1 flex-col border', LINE)}>
                  <table className="w-full border-collapse text-left">
                    <thead>
                      <tr className={clsx('h-[21px] border-b bg-[#cdc9b4]', LINE)}><th className="pl-[3px] font-normal">Исполни</th></tr>
                    </thead>
                    <tbody>
                      <tr className={clsx('h-[19px] border-b bg-[#5068be] text-white', LINE)}><td className="pl-[3px]">Кузнецо</td></tr>
                      <tr className={clsx('h-[19px] border-b text-black', LINE)}><td className="pl-[3px]">Сорокин</td></tr>
                    </tbody>
                  </table>
                  <div className="flex-1" />
                  <div className={clsx('h-[21px] border-t bg-[#f2f2f2]', LINE)} />
                </div>
              </div>
            </div>
          </div>
        </div>
        <footer className={clsx('mt-[3px] flex h-[26px] shrink-0 items-center border-t bg-[#f2f2f2] pl-[7px]', LINE)}>
          <label htmlFor="comment" className="w-[76px] shrink-0">Комментарий:</label>
          <Field id="comment" actions={['clear', 'find']} width="w-[500px]" />
          <Tool icon={<ClockDoc />} text="АРМ Запись на ремонт" width="w-[147px]" />
          <Sep />
          <Tool icon={<Cart />} text="АРМ Корзина" width="w-[95px]" />
          <Sep />
          <Tool icon={<Printer />} text="Печать" width="w-[58px]" />
          <button type="button" aria-label="Варианты печати" className="mx-[4px] flex h-[18px] w-[16px] shrink-0 items-center justify-center border border-dotted border-black bg-[#cfe0f7]">
            <Caret color="#26357d" />
          </button>
          <button type="button" className="flex w-[77px] shrink-0 items-center pl-[6px] text-[12px] font-bold">
            <CheckDoc />
            <span className="flex-1 text-center">OK</span>
          </button>
          <Sep />
          <Tool icon={<Floppy />} text="Записать" width="w-[74px]" />
          <Sep />
          <button type="button" className="flex flex-1 items-center gap-[3px] pl-[4px]"><BlueX /> Закрыть</button>
        </footer>
      </div>
    </section>
  )
}

/* ---------- print menu ---------- */

const FORMS = [
  'Бланк заявки',
  'Рабочая заявка',
  'Приемный акт',
  'Заказ-наряд',
  'Акт сдачи',
  'ТОРГ-12 (Товарная накладная)',
  'Универсальный передаточный документ',
  'Акт об оказании услуг (работы + материалы) (факсимиле) (внешняя)',
  'Акт об оказании услуг (факсимиле) (внешняя)',
  'Акт-приема передачи (внешняя)',
  'Заказ-наряд ФЛ (внешняя)',
  'Заказ-наряд ЮЛ (внешняя)',
  'ЗаказНарядДоговор (шаблон)',
  'Комплект для корп. клиентов (внешняя)',
  'Комплект для приема а/м клиента  (внешняя)',
  'Комплект для ремзоны (внешняя)',
  'Печать рекомендаций (внешняя)',
  'Рабочая заявка (внешняя)',
  'Сопроводительный лист  (внешняя)',
  'ТОРГ-12 (факсимиле) (внешняя)',
  'УПД (факсимиле) (внешняя)',
]

function PrintMenu() {
  return (
    <div role="menu" className="absolute top-[206px] right-0 w-[423px] border border-[#858585] bg-white p-px text-[#4a3a0c]">
      {FORMS.map((name) => {
        const checked = name === 'Заказ-наряд ФЛ (внешняя)'
        return (
          <button key={name} type="button" role="menuitemradio" aria-checked={checked} className="flex h-[23px] w-full items-center text-left whitespace-pre">
            <span className="flex h-full w-[24px] shrink-0 items-center justify-center bg-[#ebe5cd]">
              {checked && (
                <span className="flex size-[20px] items-center justify-center border border-[#93b1e8] bg-[#cbdff6]">
                  <Svg w={10} h={10}><path d="M1.500 4.500L4 8l4.500-6" stroke="#2b2b2b" strokeWidth="2.200" /></Svg>
                </span>
              )}
            </span>
            <span className="pl-[8px]">{name}</span>
          </button>
        )
      })}
      <div className="h-[4px] w-[24px] bg-[#ebe5cd]" />
      <button type="button" role="menuitem" className="flex h-[23px] w-full items-center bg-gradient-to-b from-[#edf4fd] to-[#bdd7f7] pl-[32px] text-left text-[#2f3f94]">
        Пакетная печать
      </button>
    </div>
  )
}

/* Red marks: frame round the batch print item, arrow from the drop-down, frames round both drop-downs */
function Marks() {
  return (
    <>
      <div className="pointer-events-none absolute top-[720px] right-[331px] h-[24px] w-[24px] border-3 border-[#f30000]" />
      <svg width="100" height="72" viewBox="0 0 100 72" fill="none" className="pointer-events-none absolute top-[716px] right-[332px] drop-shadow-[2px_4px_3px_rgba(0,0,0,0.3)]" aria-hidden>
        <path d="M89 27C83 46 68 59 47 59 29 59 15 45 15 22" stroke="#f30000" strokeWidth="3" />
        <path d="M21 3L7 26l7-3 7 2z" fill="#f30000" />
      </svg>
      <div className="pointer-events-none absolute top-[691px] right-0 h-[29px] w-[424px] rounded-[12px] border-3 border-[#f30000] shadow-[1px_3px_4px_rgba(0,0,0,0.35)]" />
      <div className="pointer-events-none absolute top-[823px] right-[140px] h-[26px] w-[23px] border-3 border-[#f30000]" />
    </>
  )
}

export default function App() {
  return (
    <main className="relative flex min-h-screen flex-col overflow-hidden border-l border-[#777] bg-white font-['Liberation_Sans',Arial,sans-serif] text-[11px] leading-[14px] text-[#594304]">
      <header className="flex h-[19px] items-center border-t border-b border-t-[#e8e8e8] border-b-[#777] bg-[#b3b3b3] text-[#5c5c5c]">
        <Tools />
        <h1 className="flex-1 pl-[3px] text-[12px] font-bold">Заказ-наряд</h1>
        <div className="flex gap-[4px] pr-[3px]">
          <button type="button" aria-label="Свернуть"><Svg><path d="M4 12.500h8" stroke="#5c5c5c" strokeWidth="2" /></Svg></button>
          <button type="button" aria-label="Восстановить"><Svg><path d="M2.500 6.500h7v6h-7zM5.500 6V3.500h7v6H10M2 7h8M5 4h8" stroke="#5c5c5c" /></Svg></button>
          <button type="button" aria-label="Закрыть окно"><Svg><path d="M3 4l9 9M12 4l-9 9" stroke="#5c5c5c" strokeWidth="2" /></Svg></button>
        </div>
      </header>
      <MainToolbar />
      <div className={clsx('mb-[3px] flex h-[24px] items-center border-b bg-[#f2f2f2] pr-[5px] pl-[4px] text-[#4d66bd]', LINE)}>
        <label htmlFor="org" className="w-[72px]">Организация:</label>
        <Field id="org" value={'ООО "Автосервис"'} actions={['dots', 'clear']} width="w-[582px]" inputClass="text-[#4d66bd]" />
        <label htmlFor="dept" className="w-[87px] pl-[3px]">Подразделение:</label>
        <Field id="dept" actions={['dots', 'clear']} width="flex-1" />
      </div>
      <OrderTable />
      <fieldset className="flex flex-col gap-[5px] pr-[5px] pl-[4px]">
        <div className="-mb-[5px] flex h-[17px] items-center">
          <h2 className="text-[12px] font-bold text-[#a56a00]">Поиск и отбор</h2>
          <span className="h-px flex-1 bg-[#b3a97c]" />
        </div>
        <div className="flex items-center">
          <label htmlFor="from" className="w-[60px]">Начиная с:</label>
          <Field id="from" value="  .  ." actions={['date', 'clear']} width="w-[96px]" />
          <label htmlFor="by" className="w-[72px] pl-3">Поиск по:</label>
          <Choice id="by" value="По номеру документа" width="w-[156px]" />
          <div className="flex min-w-0 flex-1 gap-[1px] pl-[4px]">
            <Field id="query" name="Строка поиска" actions={['clear']} width="flex-1" />
            <button type="button" aria-label="Найти" className={clsx('flex w-[20px] items-center justify-center border bg-[#f2f2f2]', LINE)}><Binoculars /></button>
          </div>
        </div>
        <div className="flex items-center">
          <label htmlFor="client" className="w-[60px]">Заказчик:</label>
          <Field id="client" actions={['dots', 'clear', 'find']} width="w-[606px]" />
          <label htmlFor="state" className="w-[72px] pl-[11px]">Состояние:</label>
          <Field id="state" actions={['down', 'clear']} width="flex-1" />
        </div>
      </fieldset>
      <footer className="mt-[4px] flex h-[26px] items-center border-t border-b border-t-[#b3a97c] border-b-[#dedede] bg-[#f2f2f2] pr-[5px] pl-[6px]">
        <span className="flex-1 text-[#8b0000]">Организация = ООО "Автосервис"</span>
        <Tool icon={<PrintList />} text="Печать" width="w-[58px]" />
        <button type="button" aria-label="Варианты печати" className="flex h-[20px] w-[26px] items-center justify-center"><Caret /></button>
        <Tool icon={<PrintList />} text="Реестр" width="w-[60px]" />
        <Sep />
        <button type="button" className="flex w-[68px] items-center gap-[3px] pl-[4px]"><BlueX /> Закрыть</button>
      </footer>
      <OrderDialog />
      <PrintMenu />
      <Marks />
    </main>
  )
}
